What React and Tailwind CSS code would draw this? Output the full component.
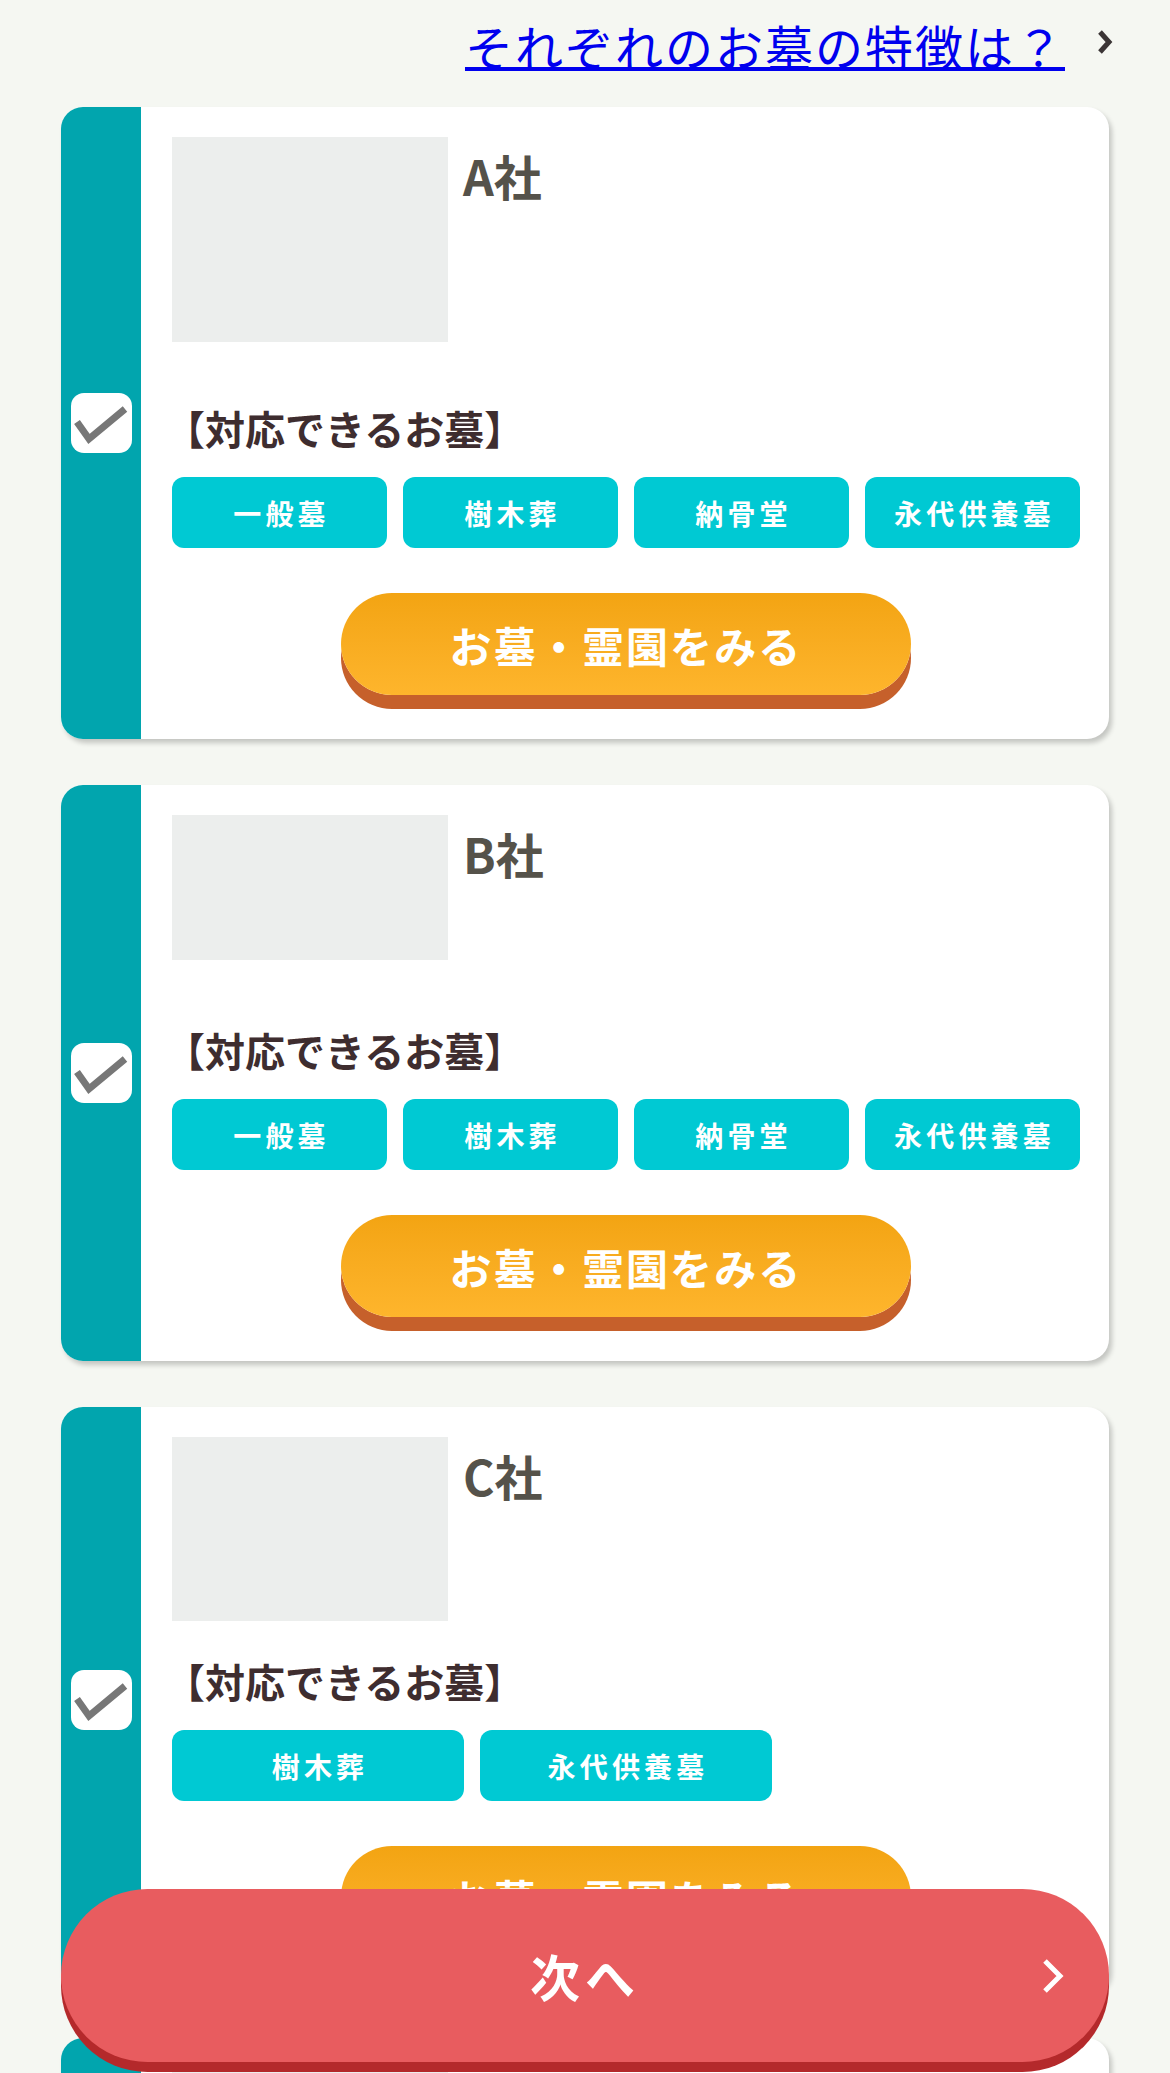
import { useState } from 'react'

// 霊園カード一覧（チェック付き）
const COMPANIES = [
  { id: 'a', name: 'A社', imgH: 'h-[205px]', gap: 'mt-[66px]', tags: ['一般墓', '樹木葬', '納骨堂', '永代供養墓'] },
  { id: 'b', name: 'B社', imgH: 'h-[145px]', gap: 'mt-[70px]', tags: ['一般墓', '樹木葬', '納骨堂', '永代供養墓'] },
  { id: 'c', name: 'C社', imgH: 'h-[184px]', gap: 'mt-[40px]', tags: ['樹木葬', '永代供養墓'] },
  { id: 'd', name: 'D社', imgH: 'h-[184px]', gap: 'mt-[40px]', tags: ['一般墓', '永代供養墓'] },
]

function CheckBox({ checked, onToggle }) {
  return (
    <button
      onClick={onToggle}
      className="w-[61px] h-[60px] rounded-[13px] bg-white flex items-center justify-center"
    >
      {checked && (
        <svg width="61" height="60" viewBox="0 0 61 60">
          <path d="M6 29 L18 46 L54 16" fill="none" stroke="#777777" strokeWidth="7" />
        </svg>
      )}
    </button>
  )
}

function CompanyCard({ company, checked, onToggle }) {
  return (
    <div className="flex rounded-[22px] overflow-hidden bg-white shadow-[3px_4px_5px_rgba(0,0,0,0.2)]">
      <div className="w-[80px] shrink-0 bg-[#01a5ae] flex items-center justify-center">
        <CheckBox checked={checked} onToggle={onToggle} />
      </div>
      <div className="flex-1 pl-[31px] pr-[29px] pt-[30px] pb-[44px]">
        <div className="flex items-start gap-[15px]">
          <div className={`w-[276px] ${company.imgH} bg-[#eceeed] shrink-0`} />
          <h2 className="mt-[14px] text-[48px] leading-none font-bold text-[#55524a]">{company.name}</h2>
        </div>
        <h3 className={`${company.gap} ml-[-7px] text-[40px] leading-none font-bold text-[#3e2d2f]`}>
          【対応できるお墓】
        </h3>
        <div className="mt-[29px] flex gap-[16px]">
          {company.tags.map((t) => (
            <div
              key={t}
              className="flex-1 max-w-[292px] h-[71px] rounded-[12px] bg-[#00c9d3] flex items-center justify-center text-white text-[28px] font-bold tracking-[0.15em] pl-[4px]"
            >
              {t}
            </div>
          ))}
        </div>
        <div className="mt-[45px] flex justify-center">
          <button className="w-[570px] h-[102px] rounded-full bg-linear-to-b from-[#f3a412] to-[#feb52c] shadow-[0_14px_0_#c6602b] text-white text-[42px] font-bold tracking-[0.05em]">
            お墓・霊園をみる
          </button>
        </div>
      </div>
    </div>
  )
}

export default function App() {
  const [checked, setChecked] = useState({ a: true, b: true, c: true, d: true })

  return (
    <div className="min-h-screen bg-[#f5f7f2] px-[61px] pb-[240px] font-['Noto_Sans_CJK_JP','Noto_Sans',sans-serif]">
      {/* ── 特徴リンク ── */}
      <div className="flex justify-end items-center gap-[31px] mr-[-5px] pt-[21px] pb-[38px]">
        <a
          href="#"
          className="text-[48px] leading-none text-[#0000ee] tracking-[2px] underline decoration-[4px] underline-offset-[1px]"
        >
          それぞれのお墓の特徴は？
        </a>
        <svg width="18" height="26" viewBox="0 0 18 26" className="mb-[6px]">
          <path d="M4 3 L13 13 L4 23" fill="none" stroke="#3b3536" strokeWidth="5" />
        </svg>
      </div>

      {/* ── カード ── */}
      <div className="flex flex-col gap-[46px]">
        {COMPANIES.map((c) => (
          <CompanyCard
            key={c.id}
            company={c}
            checked={checked[c.id]}
            onToggle={() => setChecked({ ...checked, [c.id]: !checked[c.id] })}
          />
        ))}
      </div>

      {/* ── 次へボタン ── */}
      <button className="fixed left-[61px] right-[61px] bottom-[11px] h-[173px] rounded-full bg-[#e85c5f] shadow-[0_10px_0_#b4292b] flex items-center justify-center text-white text-[50px] font-bold tracking-[0.1em]">
        次へ
        <svg width="24" height="36" viewBox="0 0 24 36" className="absolute right-[44px] top-1/2 -translate-y-1/2">
          <path d="M4 3 L19 18 L4 33" fill="none" stroke="#ffffff" strokeWidth="5" />
        </svg>
      </button>
    </div>
  )
}
